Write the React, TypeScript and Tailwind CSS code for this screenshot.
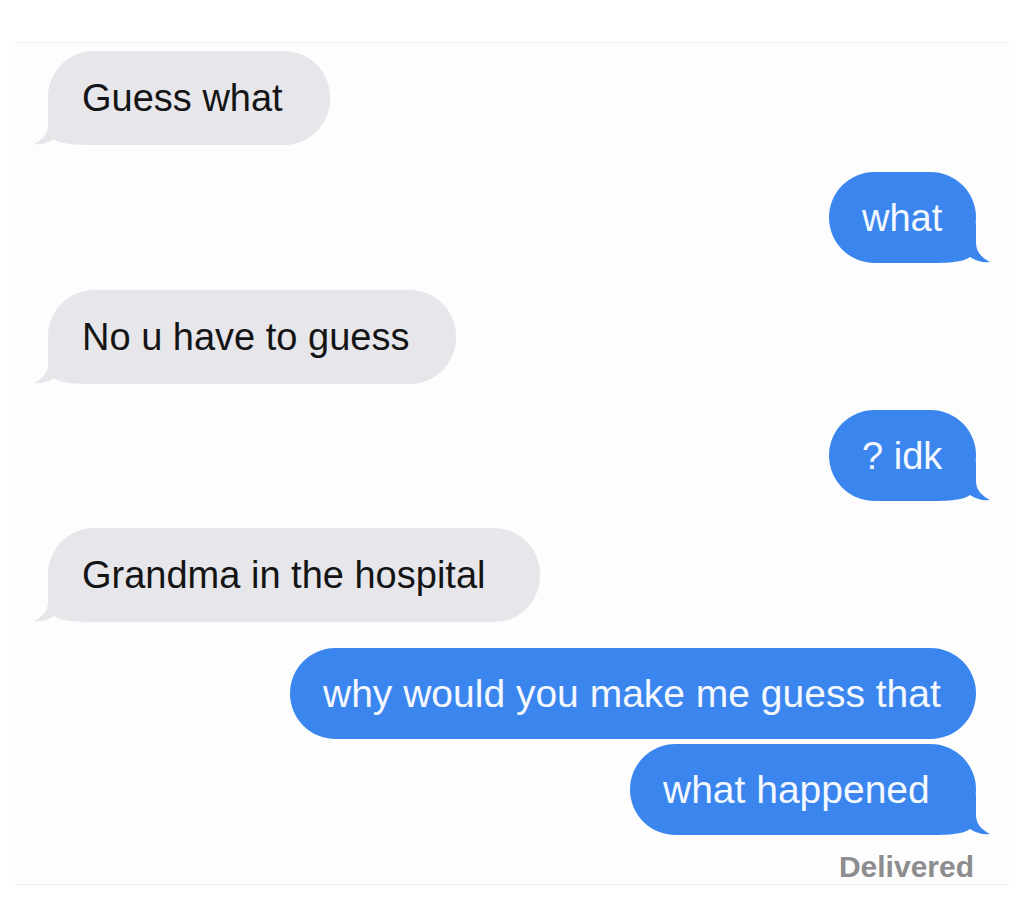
import React from 'react';

type Msg = { text: string; me: boolean; width: string; tail: boolean; gap: string; size: string };

const messages: Msg[] = [
  { text: 'Guess what', me: false, width: 'w-[282px]', tail: true, gap: 'mt-[8px]', size: 'text-[38px]' },
  { text: 'what', me: true, width: 'w-[147px]', tail: true, gap: 'mt-[27px]', size: 'text-[38px]' },
  { text: 'No u have to guess', me: false, width: 'w-[408px]', tail: true, gap: 'mt-[27px]', size: 'text-[38px]' },
  { text: '? idk', me: true, width: 'w-[147px]', tail: true, gap: 'mt-[26px]', size: 'text-[38px]' },
  { text: 'Grandma in the hospital', me: false, width: 'w-[492px]', tail: true, gap: 'mt-[27px]', size: 'text-[38px]' },
  { text: 'why would you make me guess that', me: true, width: 'w-[686px]', tail: false, gap: 'mt-[26px]', size: 'text-[39px]' },
  { text: 'what happened', me: true, width: 'w-[346px]', tail: true, gap: 'mt-[5px]', size: 'text-[39px]' },
];

// little curled tail at the bottom corner of a bubble
const Tail = ({ me }: { me: boolean }) => (
  <svg
    width="60"
    height="40"
    viewBox="0 0 60 40"
    className={
      me
        ? 'absolute bottom-0 right-[-14px] scale-x-[-1]'
        : 'absolute bottom-0 left-[-14px]'
    }
  >
    <path
      d="M14 0 L14 20 C14 29 8 35 0 39 C7 40 14 38 20 34 C26 38 34 40 60 40 L60 0 Z"
      fill={me ? '#3b86ee' : '#e6e6eb'}
    />
  </svg>
);

const Bubble = ({ msg }: { msg: Msg }) => (
  <div className={`flex ${msg.me ? 'justify-end' : 'justify-start'} ${msg.gap}`}>
    <div
      className={`relative ${msg.me ? 'h-[91px]' : 'h-[94px]'} ${msg.width} flex items-center rounded-[46px] ${
        msg.me ? 'bg-[#3b86ee] text-[#f4f8ff] pl-[33px]' : 'bg-[#e6e6eb] text-[#141414] pl-[34px]'
      }`}
    >
      {msg.tail && <Tail me={msg.me} />}
      <span className={`relative ${msg.size} leading-[44px] whitespace-nowrap`}>{msg.text}</span>
    </div>
  </div>
);

export default function App() {
  return (
    <div className="w-[1024px] h-[904px] bg-white font-['Liberation_Sans',Arial,sans-serif] pt-[42px] px-[15px]">
      <div className="h-[843px] bg-[#fdfdfd] border-t border-b border-[#efefef] px-[33px]">
        {messages.map((m, i) => (
          <Bubble key={i} msg={m} />
        ))}
        <div className="flex justify-end mt-[15px] pr-[2px]">
          <span className="text-[30px] leading-[34px] font-semibold text-[#8d8d8f]">Delivered</span>
        </div>
      </div>
    </div>
  );
}
